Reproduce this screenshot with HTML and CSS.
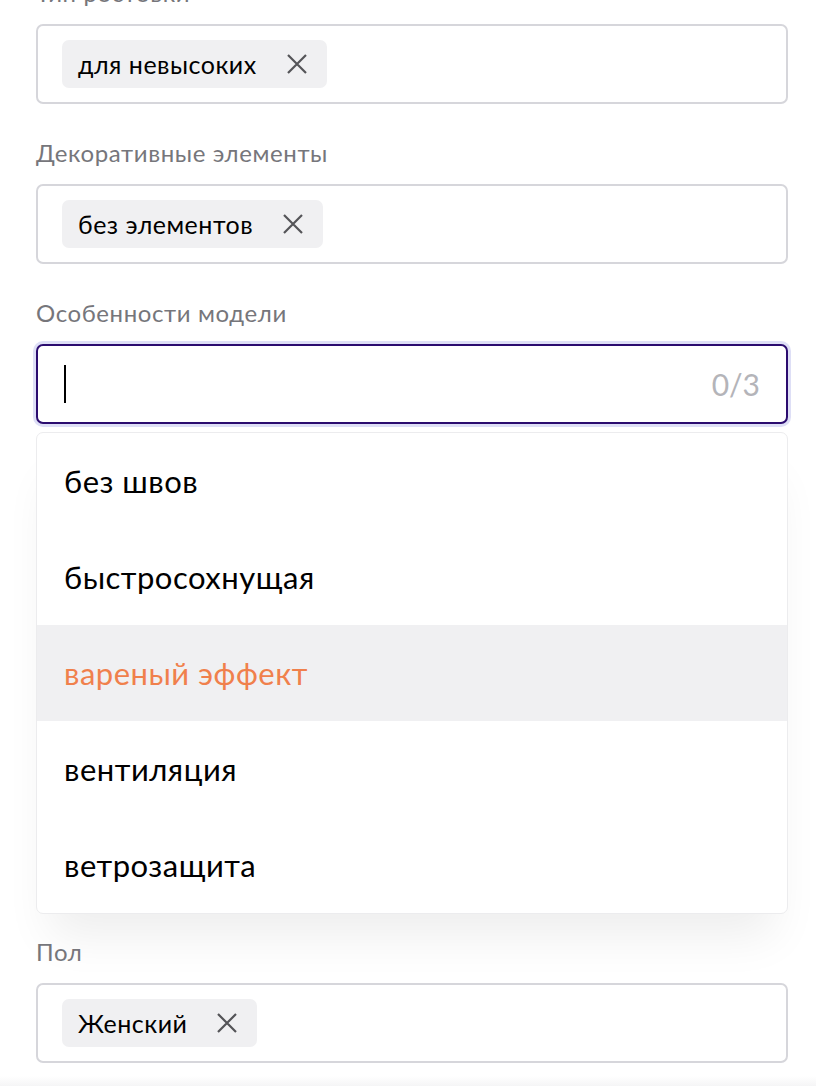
FILE: index.html
```html
<!DOCTYPE html>
<html lang="ru">
<head>
  <meta charset="UTF-8" />
  <title>Фильтры</title>
  <link rel="stylesheet" href="styles.css">
</head>
<body>
  <div class="form">
    <div class="group">
      <div class="label">Тип ростовки</div>
      <div class="field">
        <span class="chip">для невысоких
          <svg class="chip-x" viewBox="0 0 20 20"><path d="M1 1L19 19M19 1L1 19"/></svg>
        </span>
      </div>
    </div>

    <div class="group">
      <div class="label">Декоративные элементы</div>
      <div class="field">
        <span class="chip">без элементов
          <svg class="chip-x" viewBox="0 0 20 20"><path d="M1 1L19 19M19 1L1 19"/></svg>
        </span>
      </div>
    </div>

    <div class="group">
      <div class="label">Особенности модели</div>
      <div class="field focused">
        <span class="caret"></span>
        <span class="counter">0/3</span>
      </div>
      <ul class="dropdown">
        <li class="option">без швов</li>
        <li class="option">быстросохнущая</li>
        <li class="option active">вареный эффект</li>
        <li class="option">вентиляция</li>
        <li class="option">ветрозащита</li>
      </ul>
    </div>

    <div class="group">
      <div class="label">Пол</div>
      <div class="field">
        <span class="chip">Женский
          <svg class="chip-x" viewBox="0 0 20 20"><path d="M1 1L19 19M19 1L1 19"/></svg>
        </span>
      </div>
    </div>
  </div>
  <div class="bottom-fade"></div>
</body>
</html>
```

FILE: styles.css
```css
html, body {
  margin: 0;
  padding: 0;
  background: #ffffff;
  color: #000000;
  font-family: Lato, 'Noto Sans', sans-serif;
  height: 100%;
  overflow: hidden;
}

.form {
  display: flex;
  flex-direction: column;
  gap: 34px;
  margin-top: -22px;
  padding: 0 28px 0 36px;
}

.group {
  display: flex;
  flex-direction: column;
}

.label {
  font-size: 24px;
  line-height: 30px;
  letter-spacing: 0.6px;
  color: #76767b;
  margin-bottom: 16px;
}

.field {
  height: 80px;
  box-sizing: border-box;
  border: 2px solid #d6d6db;
  border-radius: 7px;
  padding: 0 24px;
  display: flex;
  align-items: center;
  background: #fff;
}

.field.focused {
  border-color: #2b0c6f;
  box-shadow: 0 0 0 3px #dedff6;
  padding: 0 26px;
}

.caret {
  width: 2px;
  height: 38px;
  background: #000;
}

.counter {
  margin-left: auto;
  font-size: 30px;
  color: #b4b4b9;
}

.chip {
  display: inline-flex;
  align-items: center;
  height: 48px;
  padding: 0 20px 0 16px;
  gap: 30px;
  background: #f0f0f2;
  border-radius: 7px;
  font-size: 25px;
  letter-spacing: 0.5px;
}

.chip-x {
  width: 20px;
  height: 20px;
  fill: none;
  stroke: #545458;
  stroke-width: 2.2;
}

.dropdown {
  list-style: none;
  margin: 8px 0 -11px;
  padding: 0;
  border: 1px solid #ececee;
  border-radius: 7px;
  overflow: hidden;
  background: #fff;
  box-shadow: 0 36px 44px -14px rgba(0, 0, 0, 0.07);
}

.option {
  height: 96px;
  display: flex;
  align-items: center;
  padding: 0 27px;
  font-size: 31px;
  letter-spacing: 0.5px;
}

.option.active {
  background: #f0f0f2;
  color: #f0804c;
}

.bottom-fade {
  position: fixed;
  left: 0;
  right: 0;
  bottom: 0;
  height: 10px;
  background: linear-gradient(#ffffff, #f5f5f6);
}
```
